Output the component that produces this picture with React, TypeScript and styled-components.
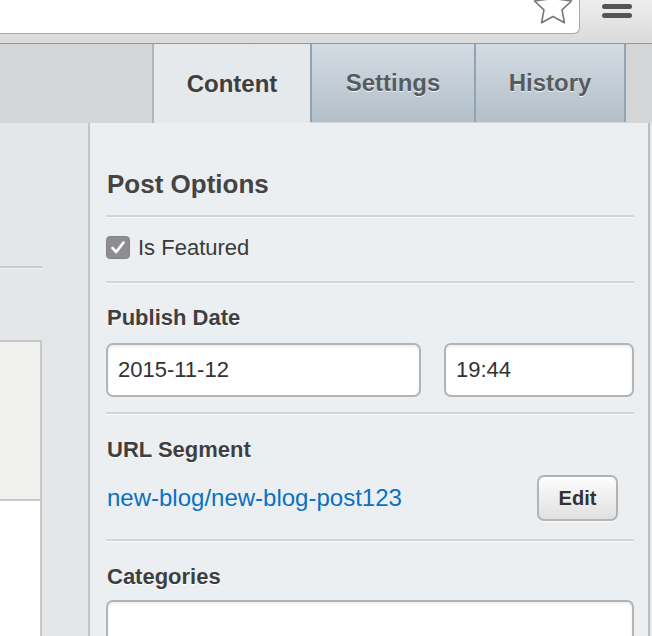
import React from "react";
import styled, { createGlobalStyle } from "styled-components";

const Global = createGlobalStyle`
  html, body { margin: 0; padding: 0; }
  body {
    width: 652px;
    height: 636px;
    overflow: hidden;
    font-family: "Liberation Sans", Arial, Helvetica, sans-serif;
    background: #e4e7ea;
  }
  * { box-sizing: border-box; }
`;

const Page = styled.div`
  display: flex;
  flex-direction: column;
  width: 652px;
  height: 636px;
  overflow: hidden;
`;

/* ---------- browser chrome ---------- */
const ChromeBar = styled.div`
  display: flex;
  height: 44px;
  background: linear-gradient(#eeeeee, #dadada);
  border-bottom: 1px solid #9a9a9a;
  flex-shrink: 0;
`;

const AddressField = styled.div`
  width: 580px;
  height: 34px;
  background: #fff;
  border-right: 1px solid #a9a9a9;
  border-bottom: 1px solid #a9a9a9;
  border-bottom-right-radius: 6px;
  display: flex;
  justify-content: flex-end;
  align-items: flex-start;
  overflow: hidden;
`;

const StarIcon = styled.svg`
  width: 44px;
  height: 40px;
  margin-top: -16px;
  margin-right: 4px;
  flex-shrink: 0;
`;

const MenuButton = styled.div`
  display: flex;
  flex-direction: column;
  gap: 4px;
  padding: 4px 0 0 22px;
`;

const MenuBar = styled.span`
  display: block;
  width: 30px;
  height: 5px;
  border-radius: 3px;
  background: #555;
`;

/* ---------- tabs ---------- */
const TabBar = styled.div`
  display: flex;
  justify-content: flex-end;
  align-items: flex-start;
  height: 79px;
  padding-right: 26px;
  background: #d4d5d7;
  flex-shrink: 0;
`;

const Tab = styled.div<{ $active?: boolean; $last?: boolean; $width: number }>`
  width: ${(p) => p.$width}px;
  height: ${(p) => (p.$active ? "79px" : "78px")};
  display: flex;
  align-items: center;
  justify-content: center;
  font-size: 24px;
  font-weight: bold;
  border-left: 2px solid ${(p) => (p.$active ? "#b5b5b8" : "#8fa3b3")};
  border-right: ${(p) => (p.$last ? "2px solid #8fa3b3" : "none")};
  color: ${(p) => (p.$active ? "#3e3e3e" : "#565b60")};
  background: ${(p) =>
    p.$active ? "#e6e9ec" : "linear-gradient(#d4dbe2, #b2c0ca)"};
  text-shadow: ${(p) => (p.$active ? "none" : "0 1px 0 rgba(255,255,255,0.8)")};
`;

/* ---------- main area ---------- */
const Main = styled.div`
  flex: 1;
  display: flex;
  padding-right: 2px;
  background: #e6e8eb;
  min-height: 0;
`;

const LeftColumn = styled.div`
  width: 90px;
  flex-shrink: 0;
  display: flex;
  flex-direction: column;
  padding-right: 46px;
  background: #e4e7ea;
  border-right: 2px solid #c5c5c9;
  & > * { flex-shrink: 0; }
`;

const LeftRule = styled.div`
  margin-top: 143px;
  height: 3px;
  border-top: 2px solid #cbcbcb;
  background: #f4f4f4;
`;

const LeftToolbar = styled.div`
  margin-top: 71px;
  height: 161px;
  background: #f0f0ee;
  border-top: 2px solid #c8c8c8;
  border-right: 2px solid #c8c8c8;
  border-bottom: 2px solid #c8c8c8;
`;

const LeftContent = styled.div`
  flex: 1 0 auto;
  background: #fff;
  border-right: 2px solid #c8c8c8;
`;

const Panel = styled.div`
  flex: 1;
  min-width: 0;
  display: flex;
  flex-direction: column;
  padding: 46px 14px 0 16px;
  background: #eceff2;
  border-right: 2px solid #bdbdc0;
  & > * { flex-shrink: 0; }
`;

const Heading = styled.h2`
  margin: 0;
  padding-left: 1px;
  font-size: 26px;
  line-height: 30px;
  font-weight: bold;
  color: #444;
`;

const Divider = styled.div<{ $gap: number }>`
  margin-top: ${(p) => p.$gap}px;
  height: 2px;
  background: #d2d5d8;
  box-shadow: 0 1px 0 #f8f9fa;
`;

const CheckRow = styled.label`
  display: flex;
  align-items: center;
  gap: 8px;
  height: 23px;
  margin: 19px 0 22px;
  font-size: 22px;
  color: #3a3a3a;
`;

const CheckBox = styled.span`
  width: 24px;
  height: 23px;
  border-radius: 4px;
  background: #8f8d93;
  border: 1px solid #85838a;
  display: flex;
  align-items: center;
  justify-content: center;
`;

const FieldLabel = styled.div<{ $gap: number }>`
  margin-top: ${(p) => p.$gap}px;
  padding-left: 1px;
  font-size: 22px;
  line-height: 26px;
  font-weight: bold;
  color: #3f3f3f;
  text-shadow: 0 1px 0 #fff;
`;

const InputRow = styled.div`
  display: flex;
  gap: 23px;
  margin-top: 12px;
`;

const TextInput = styled.input<{ $width: number; $height?: number }>`
  width: ${(p) => p.$width}px;
  flex-shrink: 0;
  height: ${(p) => p.$height ?? 54}px;
  padding: 0 10px;
  font-family: inherit;
  font-size: 22px;
  color: #333;
  background: #fff;
  border: 2px solid #b4b4b4;
  border-radius: 7px;
  box-shadow: inset 0 2px 3px rgba(0, 0, 0, 0.07);
  outline: none;
`;

const WideInput = styled(TextInput)`
  margin-top: 10px;
`;

const LinkRow = styled.div`
  display: flex;
  align-items: center;
  justify-content: space-between;
  margin-top: 12px;
  height: 46px;
  padding-left: 1px;
  padding-right: 16px;
`;

const SegmentLink = styled.a`
  font-size: 24px;
  color: #0b6fc2;
  text-decoration: none;
`;

const EditButton = styled.button`
  width: 81px;
  height: 46px;
  flex-shrink: 0;
  font-family: inherit;
  font-size: 20px;
  font-weight: bold;
  color: #333;
  background: linear-gradient(#fdfdfd, #e0e0e0);
  border: 2px solid #b3b3b3;
  border-radius: 7px;
  box-shadow: 0 1px 0 rgba(255, 255, 255, 0.8);
  padding: 0;
`;

export default function App() {
  return (
    <>
      <Global />
      <Page>
        <ChromeBar>
          <AddressField>
            <StarIcon viewBox="0 0 44 40">
              <polygon
                points="22,3.5 27.58,15.31 40.55,16.97 31.03,25.94 33.46,38.78 22,32.5 10.54,38.78 12.97,25.94 3.45,16.97 16.42,15.31"
                fill="#fff"
                stroke="#777"
                strokeWidth="1.6"
                strokeLinejoin="round"
              />
            </StarIcon>
          </AddressField>
          <MenuButton>
            <MenuBar />
            <MenuBar />
          </MenuButton>
        </ChromeBar>

        <TabBar>
          <Tab $active $width={158}>Content</Tab>
          <Tab $width={164}>Settings</Tab>
          <Tab $last $width={152}>History</Tab>
        </TabBar>

        <Main>
          <LeftColumn>
            <LeftRule />
            <LeftToolbar />
            <LeftContent />
          </LeftColumn>

          <Panel>
            <Heading>Post Options</Heading>
            <Divider $gap={16} />
            <CheckRow>
              <CheckBox>
                <svg width="16" height="15" viewBox="0 0 16 15">
                  <path
                    d="M2.5 8 L6.2 12 L13.5 2.5"
                    fill="none"
                    stroke="#fff"
                    strokeWidth="2.6"
                    strokeLinecap="round"
                    strokeLinejoin="round"
                  />
                </svg>
              </CheckBox>
              Is Featured
            </CheckRow>
            <Divider $gap={0} />

            <FieldLabel $gap={22}>Publish Date</FieldLabel>
            <InputRow>
              <TextInput $width={315} defaultValue="2015-11-12" readOnly />
              <TextInput $width={190} defaultValue="19:44" readOnly />
            </InputRow>
            <Divider $gap={15} />

            <FieldLabel $gap={23}>URL Segment</FieldLabel>
            <LinkRow>
              <SegmentLink href="#">new-blog/new-blog-post123</SegmentLink>
              <EditButton type="button">Edit</EditButton>
            </LinkRow>
            <Divider $gap={18} />

            <FieldLabel $gap={23}>Categories</FieldLabel>
            <WideInput $width={528} $height={60} readOnly />
          </Panel>
        </Main>
      </Page>
    </>
  );
}
